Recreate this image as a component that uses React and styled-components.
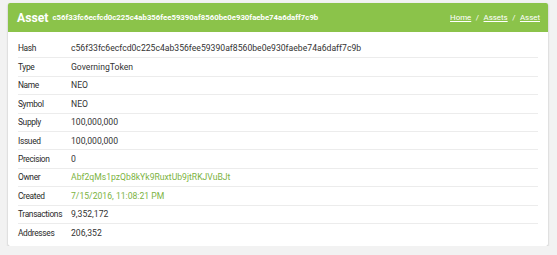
import React from "react";
import styled, { createGlobalStyle } from "styled-components";

const Global = createGlobalStyle`
  html, body { margin: 0; padding: 0; background: #f2f2f2; }
  body { font-family: Roboto, "Liberation Sans", Arial, sans-serif; }
`;

const Page = styled.div`
  padding: 3px 9px 0 8px;
`;

const Card = styled.div`
  background: #fff;
  box-shadow: 0 1px 2px rgba(0,0,0,0.28);
  border-radius: 2px;
  overflow: hidden;
  width: 540px;
`;

const Header = styled.div`
  background: #8bc34a;
  height: 29px;
  display: flex;
  align-items: center;
  padding: 0 8px 0 9px;
  color: #fff;
`;

const Title = styled.span`
  font-size: 12.2px;
  font-weight: 700;
  margin-right: 4px;
`;

const HeaderHash = styled.span`
  font-size: 7.8px;
  font-weight: 700;
  flex: 1;
`;

const Crumbs = styled.div`
  font-size: 7.9px;
  display: flex;
  gap: 4.5px;
`;

const Crumb = styled.a`
  color: #fff;
  text-decoration: underline;
`;

const Body = styled.div`
  padding: 7px 10px 5px 10px;
`;

const Table = styled.div`
  display: flex;
  flex-direction: column;
`;

const Row = styled.div`
  display: grid;
  grid-template-columns: 53px 1fr;
  height: 18.4px;
  align-items: center;
  border-top: ${p => (p.first ? "none" : "1px solid #ececec")};
  box-sizing: border-box;
`;

const Label = styled.span`
  font-size: 8.4px;
  letter-spacing: -0.35px;
  color: #2a2a2a;
`;

const Value = styled.span`
  font-size: 8.65px;
  color: ${p => (p.link ? "#7cb342" : "#333")};
`;

const rows = [
  ["Hash", "c56f33fc6ecfcd0c225c4ab356fee59390af8560be0e930faebe74a6daff7c9b"],
  ["Type", "GoverningToken"],
  ["Name", "NEO"],
  ["Symbol", "NEO"],
  ["Supply", "100,000,000"],
  ["Issued", "100,000,000"],
  ["Precision", "0"],
  ["Owner", "Abf2qMs1pzQb8kYk9RuxtUb9jtRKJVuBJt", true],
  ["Created", "7/15/2016, 11:08:21 PM", true],
  ["Transactions", "9,352,172"],
  ["Addresses", "206,352"],
];

export default function App() {
  return (
    <>
      <Global />
      <Page>
        <Card>
          <Header>
            <Title>Asset</Title>
            <HeaderHash>c56f33fc6ecfcd0c225c4ab356fee59390af8560be0e930faebe74a6daff7c9b</HeaderHash>
            <Crumbs>
              <Crumb>Home</Crumb>
              <span>/</span>
              <Crumb>Assets</Crumb>
              <span>/</span>
              <Crumb>Asset</Crumb>
            </Crumbs>
          </Header>
          <Body>
            <Table>
              {rows.map(([k, v, link], i) => (
                <Row key={k} first={i === 0}>
                  <Label>{k}</Label>
                  <Value link={link}>{v}</Value>
                </Row>
              ))}
            </Table>
          </Body>
        </Card>
      </Page>
    </>
  );
}
